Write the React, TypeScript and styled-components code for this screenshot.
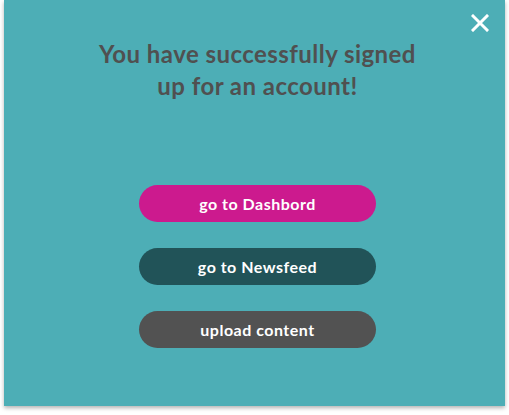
import React from "react";
import styled, { createGlobalStyle } from "styled-components";

const Global = createGlobalStyle`
  html, body { margin: 0; padding: 0; background: #ffffff; }
  body { font-family: "Lato", "Open Sans", sans-serif; }
`;

const Page = styled.div`
  width: 509px;
  height: 415px;
  padding: 0 4px;
  box-sizing: border-box;
`;

const Modal = styled.div`
  position: relative;
  height: 406px;
  background: #4daeb6;
  box-shadow: 0 2px 4px rgba(0, 0, 0, 0.3);
  display: flex;
  flex-direction: column;
  align-items: center;
  padding-top: 38px;
  padding-left: 6px;
  box-sizing: border-box;
`;

const Close = styled.button`
  position: absolute;
  top: 12px;
  right: 14px;
  width: 22px;
  height: 22px;
  padding: 0;
  border: none;
  background: transparent;
  display: flex;
  align-items: center;
  justify-content: center;
`;

const Title = styled.h1`
  margin: 0;
  font-size: 24px;
  line-height: 32px;
  font-weight: 700;
  color: #505050;
  text-align: center;
  letter-spacing: 0.45px;
`;

const Actions = styled.div`
  margin-top: 83px;
  display: flex;
  flex-direction: column;
  gap: 26px;
`;

const Action = styled.button<{ $bg: string }>`
  width: 237px;
  height: 37px;
  border: none;
  border-radius: 19px;
  background: ${(p) => p.$bg};
  color: #ffffff;
  font-family: "Lato", "Open Sans", sans-serif;
  font-size: 16px;
  font-weight: 700;
  letter-spacing: 0.5px;
  padding: 0;
`;

export default function App() {
  return (
    <>
      <Global />
      <Page>
        <Modal>
          <Close aria-label="close">
            <svg width="18" height="18" viewBox="0 0 18 18">
              <path d="M2 2 L16 16 M16 2 L2 16" stroke="#ffffff" strokeWidth="3" strokeLinecap="square" />
            </svg>
          </Close>
          <Title>
            You have successfully signed
            <br />
            up for an account!
          </Title>
          <Actions>
            <Action $bg="#cc1a8e">go to Dashbord</Action>
            <Action $bg="#215358">go to Newsfeed</Action>
            <Action $bg="#525252">upload content</Action>
          </Actions>
        </Modal>
      </Page>
    </>
  );
}
